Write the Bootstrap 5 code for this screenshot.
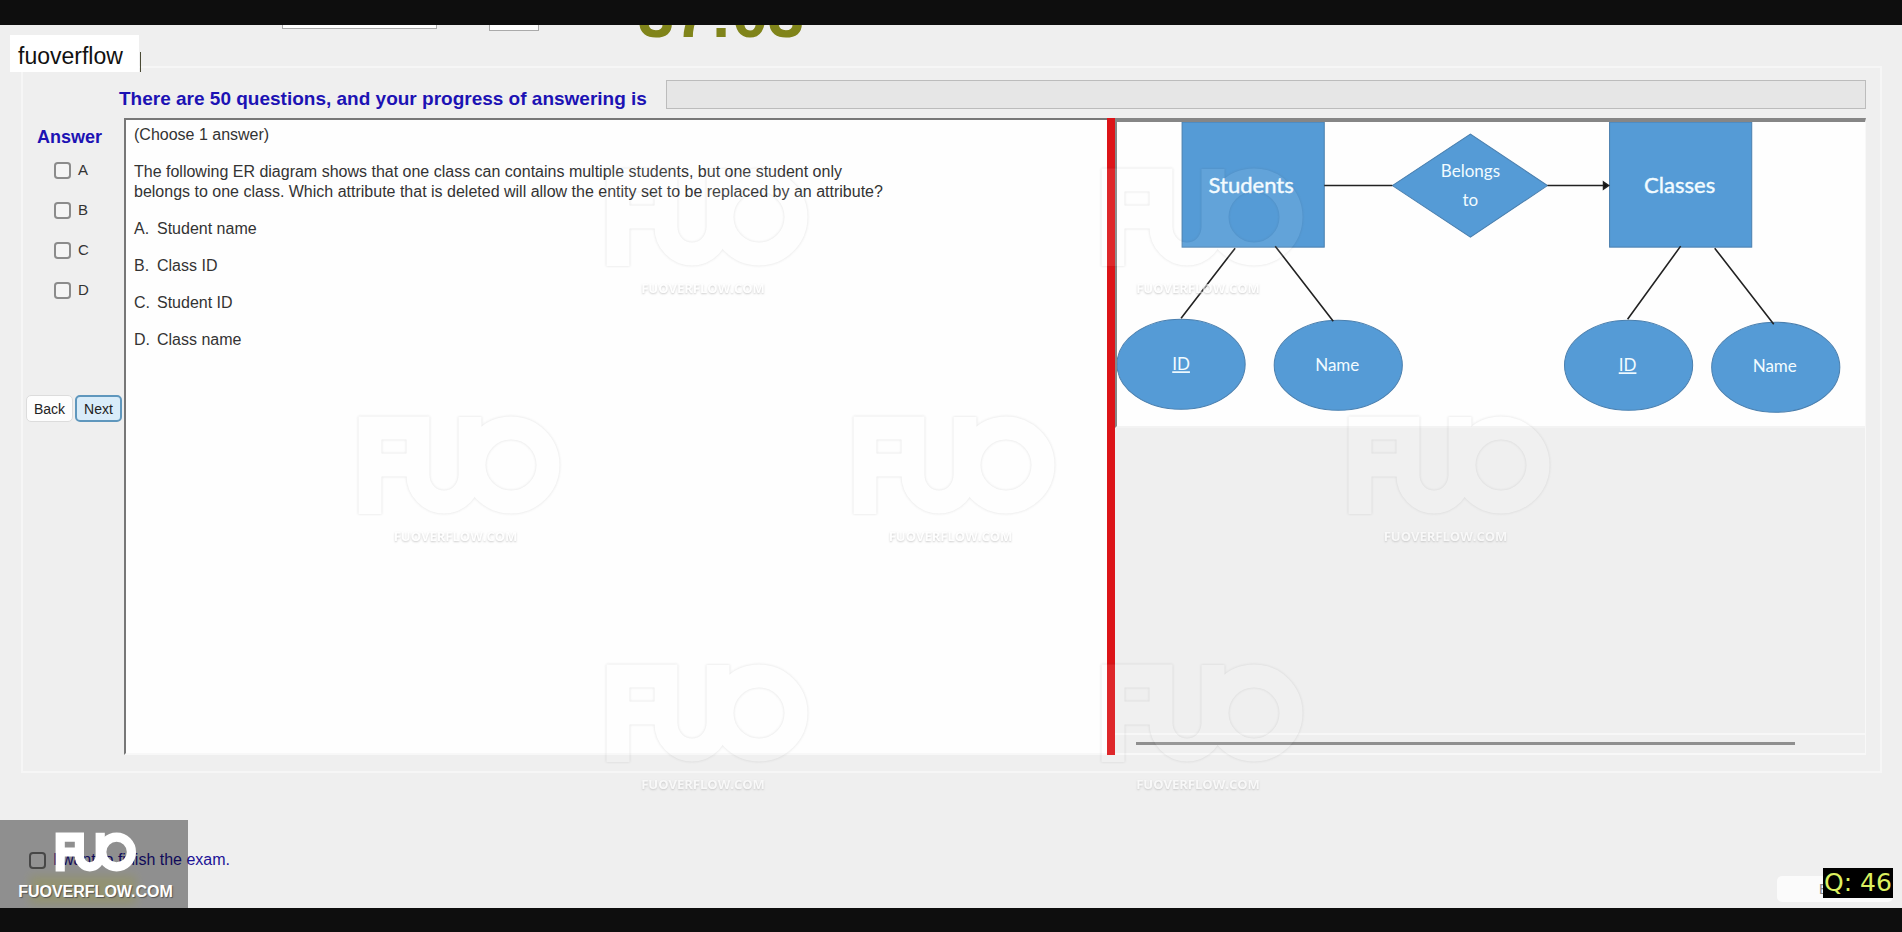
<!DOCTYPE html>
<html lang="en">
<head>
<meta charset="utf-8">
<meta name="viewport" content="width=device-width, initial-scale=1">
<title>Exam - Question 46</title>
<link href="https://cdn.jsdelivr.net/npm/bootstrap@5.3.0/dist/css/bootstrap.min.css" rel="stylesheet">
<style>
  body { font-family: "Liberation Sans", Arial, sans-serif; background: #0e0e0e; color: #333; }
  .frame-bar { height: 24px; flex: none; }
  .frame-bar.is-top { height: 25px; }
  .screen { background: #efefef; }
  .top-strip { height: 41px; padding-left: 282px; }
  .cut-select { background: #fff; border: 1px solid #aaa; border-radius: 0; padding: 0; height: 28px; appearance: none; }
  .cut-select.wide { width: 155px; margin-bottom: 37px; }
  .cut-select.slim { width: 50px; margin: 0 99px 35px 52px; }
  .timer { font-size: 65px; line-height: 64px; font-weight: 700; color: #80841a; margin-bottom: 19px; }
  .site-tag { left: 10px; top: 10px; width: 129px; height: 37px; line-height: 43px; padding-left: 8px; background: #fff; color: #111; font-size: 23px; z-index: 2; }
  .site-tag::after { content: ""; position: absolute; left: 130px; top: 17px; width: 1px; height: 20px; background: #4a4a35; }
  .group-box { margin: 0 20px 0 21px; border: 2px solid #f6f6f6; padding: 12px 14px 16px 0; min-width: 0; }
  .blue-bold { color: #1c12b4; font-weight: 700; font-size: 18px; line-height: 20px; }
  .progress-head { padding-left: 96px; gap: 19px; margin-bottom: 9px; }
  .progress-head .blue-bold { font-size: 19px; padding-top: 8px; }
  .answer-progress { height: 29px; border: 1px solid #bcbcbc; border-radius: 0; background: #e6e6e6; }
  .answer-col { width: 101px; flex: none; padding-top: 9px; }
  .opt { height: 20px; padding-left: 31px; gap: 7px; font-size: 15px; }
  .opt-list { gap: 20px; margin-top: 13px; }
  .tick { width: 17px; height: 17px; margin: 0; border: 2px solid #8b8b8b; border-radius: 4px; background-color: #f4f4f4; flex: none; }
  .nav-btn { height: 27px; width: 47px; padding: 0; font-size: 14px; line-height: 20px; color: #222; background: #fdfdfd; border: 1px solid #dcdcdc; border-radius: 5px; }
  .nav-btn.is-default { background: #d9ecf9; border: 2px solid #5f97bd; }
  .nav-row { gap: 2px; margin-top: 95px; padding-left: 3px; }
  .question { flex: 964 1 0; min-width: 0; background: #fefefe; border-left: 2px solid #777; border-top: 2px solid #777; border-bottom: 2px solid #f8f8f8; padding: 5px 8px; font-size: 16px; line-height: 20px; }
  .question p { margin-bottom: 17px; }
  .question ol { list-style: none; padding: 0; margin: 0; }
  .question li { display: flex; margin-bottom: 17px; }
  .question li span { width: 23px; }
  .splitter { width: 8px; flex: none; background: #dc1418; }
  .figure-pane { flex: 749 1 0; min-width: 0; border-top: 4px solid #868686; border-right: 1px solid #f8f8f8; border-bottom: 2px solid #f8f8f8; }
  .figure-box { background: #fefefe; border-left: 2px solid #868686; border-bottom: 2px solid #f3f3f3; }
  .figure-box svg { display: block; width: 100%; height: auto; }
  .er text { font-family: Lato, sans-serif; fill: #f2fbff; text-anchor: middle; }
  .scroll-foot { border-top: 2px solid #f7f7f7; height: 20px; padding: 7px 70px 0 21px; }
  .scroll-foot hr { margin: 0; border-top: 3px solid #8f8f8f; opacity: 1; }
  .foot { height: 135px; flex: none; }
  .finish { left: 29px; top: 75px; gap: 7px; color: #1c1296; font-size: 16px; }
  .finish .tick { border-color: #777; }
  .finish-glow { left: 30px; bottom: 4px; width: 106px; height: 28px; background: #ffff50; opacity: .3; filter: blur(5px); }
  .logo-box { left: 0; bottom: 0; width: 188px; height: 88px; background: rgba(0,0,0,.4); color: #fff; padding: 12px 0 0 3px; }
  .logo-box svg { width: 82px; height: 40px; display: block; margin: 0 auto; }
  .logo-name { font-weight: 700; font-size: 16px; line-height: 24px; margin-top: 8px; text-shadow: 1px 1px 1px #555; }
  .exit-btn { right: 9px; bottom: 6px; width: 116px; height: 26px; border: 0; border-radius: 5px; background: #fbfbfb; color: #888; font-size: 14px; padding: 0 0 0 42px; text-align: left; }
  .q-badge { right: 9px; bottom: 10px; height: 30px; width: 70px; line-height: 29px; background: #000; color: #dcf060; font-family: "DejaVu Sans", sans-serif; font-size: 25px; white-space: nowrap; text-align: center; }
  .marks { inset: 142px 0 0 7px; pointer-events: none; z-index: 1; }
  .mark-row { gap: 290px; height: 248px; }
  .mark-item { width: 205px; flex: none; text-align: center; color: #fff; }
  .mark-item svg { display: block; width: 205px; height: 100px; opacity: .08; filter: drop-shadow(0 0 1px #000) drop-shadow(0 0 1px #666); }
  .mark-item span { display: block; font-family: "Open Sans", sans-serif; font-weight: 700; font-size: 13px; line-height: 20px; margin-top: 11px; opacity: .6; text-shadow: 0 1px 2px #aaa; padding-right: 8px; }
</style>
</head>
<body>
<svg width="0" height="0" class="position-absolute" aria-hidden="true">
  <symbol id="brand" viewBox="0 0 205 100">
    <g fill="none" stroke="currentColor" stroke-width="23">
      <path d="M13 99V13H61V60a25 26 0 0 0 52 0V2M13 50H58"/>
      <circle cx="154" cy="50" r="37"/>
    </g>
  </symbol>
</svg>
<div class="d-flex flex-column min-vh-100">
  <div class="frame-bar is-top"></div>
  <main class="screen flex-grow-1 d-flex flex-column position-relative overflow-hidden">
    <div class="site-tag position-absolute">fuoverflow</div>
    <div class="top-strip d-flex align-items-end overflow-hidden">
      <select class="cut-select wide" aria-label="Font"></select>
      <select class="cut-select slim" aria-label="Size"></select>
      <div class="timer">37:03</div>
    </div>
    <section class="group-box flex-grow-1 d-flex flex-column">
      <div class="progress-head d-flex align-items-center">
        <div class="blue-bold text-nowrap">There are 50 questions, and your progress of answering is</div>
        <div class="answer-progress progress flex-grow-1" role="progressbar" aria-label="Answering progress" aria-valuenow="0" aria-valuemin="0" aria-valuemax="50"></div>
      </div>
      <div class="d-flex flex-grow-1">
        <div class="answer-col">
          <div class="blue-bold text-center pe-2">Answer</div>
          <div class="opt-list d-flex flex-column">
            <div class="opt d-flex align-items-center"><input class="tick form-check-input" type="checkbox" id="a"><label for="a">A</label></div>
            <div class="opt d-flex align-items-center"><input class="tick form-check-input" type="checkbox" id="b"><label for="b">B</label></div>
            <div class="opt d-flex align-items-center"><input class="tick form-check-input" type="checkbox" id="c"><label for="c">C</label></div>
            <div class="opt d-flex align-items-center"><input class="tick form-check-input" type="checkbox" id="d"><label for="d">D</label></div>
          </div>
          <div class="nav-row d-flex">
            <button type="button" class="nav-btn btn">Back</button>
            <button type="button" class="nav-btn btn is-default">Next</button>
          </div>
        </div>
        <article class="question">
          <p>(Choose 1 answer)</p>
          <p>The following ER diagram shows that one class can contains multiple students, but one student only<br>belongs to one class. Which attribute that is deleted will allow the entity set to be replaced by an attribute?</p>
          <ol>
            <li><span>A.</span>Student name</li>
            <li><span>B.</span>Class ID</li>
            <li><span>C.</span>Student ID</li>
            <li><span>D.</span>Class name</li>
          </ol>
        </article>
        <div class="splitter"></div>
        <div class="figure-pane d-flex flex-column justify-content-between">
          <div class="figure-box">
            <svg class="er" viewBox="0 0 747 304" role="img" aria-label="ER diagram">
              <g fill="#559bd6" stroke="#4a7fae" stroke-width="1">
                <rect x="65" y="0" width="142" height="125"/>
                <rect x="492" y="0" width="142" height="125"/>
                <path d="M275 63.5L353 12l77 51.5L353 115z"/>
                <ellipse cx="64" cy="242" rx="64" ry="45"/>
                <ellipse cx="221" cy="243" rx="64" ry="45"/>
                <ellipse cx="511" cy="243" rx="64" ry="45"/>
                <ellipse cx="658" cy="245" rx="64" ry="45"/>
              </g>
              <g stroke="#222" stroke-width="1.6" fill="none">
                <path d="M207 63.5h68M430 63.5h58M118 126L64 196M158 124l58 75M563 124l-53 73M597 126l59 76"/>
                <path d="M486 60l5 3.500-5 3.500z" fill="#111"/>
              </g>
              <g font-size="22" stroke="#f2fbff" stroke-width=".4"><text x="134" y="71">Students</text><text x="562" y="71">Classes</text></g>
              <g font-size="17"><text x="353" y="55">Belongs</text><text x="353" y="84">to</text><text x="64" y="248" text-decoration="underline">ID</text><text x="220" y="249">Name</text><text x="510" y="249" text-decoration="underline">ID</text><text x="657" y="250">Name</text></g>
            </svg>
          </div>
          <div class="scroll-foot"><hr></div>
        </div>
      </div>
    </section>
    <footer class="foot position-relative">
      <div class="finish position-absolute d-flex align-items-center">
        <input class="tick form-check-input" type="checkbox" id="finish"><label for="finish">I want to finish the exam.</label>
      </div>
      <div class="finish-glow position-absolute"></div>
      <div class="logo-box position-absolute text-center">
        <svg aria-hidden="true"><use href="#brand"/></svg>
        <div class="logo-name">FUOVERFLOW.COM</div>
      </div>
      <button type="button" class="exit-btn position-absolute">E</button>
      <div class="q-badge position-absolute">Q: 46</div>
    </footer>
    <div class="marks position-absolute" aria-hidden="true">
      <div class="mark-row d-flex justify-content-center">
        <div class="mark-item"><svg><use href="#brand"/></svg><span>FUOVERFLOW.COM</span></div>
        <div class="mark-item"><svg><use href="#brand"/></svg><span>FUOVERFLOW.COM</span></div>
      </div>
      <div class="mark-row d-flex justify-content-center">
        <div class="mark-item"><svg><use href="#brand"/></svg><span>FUOVERFLOW.COM</span></div>
        <div class="mark-item"><svg><use href="#brand"/></svg><span>FUOVERFLOW.COM</span></div>
        <div class="mark-item"><svg><use href="#brand"/></svg><span>FUOVERFLOW.COM</span></div>
      </div>
      <div class="mark-row d-flex justify-content-center">
        <div class="mark-item"><svg><use href="#brand"/></svg><span>FUOVERFLOW.COM</span></div>
        <div class="mark-item"><svg><use href="#brand"/></svg><span>FUOVERFLOW.COM</span></div>
      </div>
    </div>
  </main>
  <div class="frame-bar"></div>
</div>
<script src="https://cdn.jsdelivr.net/npm/bootstrap@5.3.0/dist/js/bootstrap.bundle.min.js"></script>
</body>
</html>
